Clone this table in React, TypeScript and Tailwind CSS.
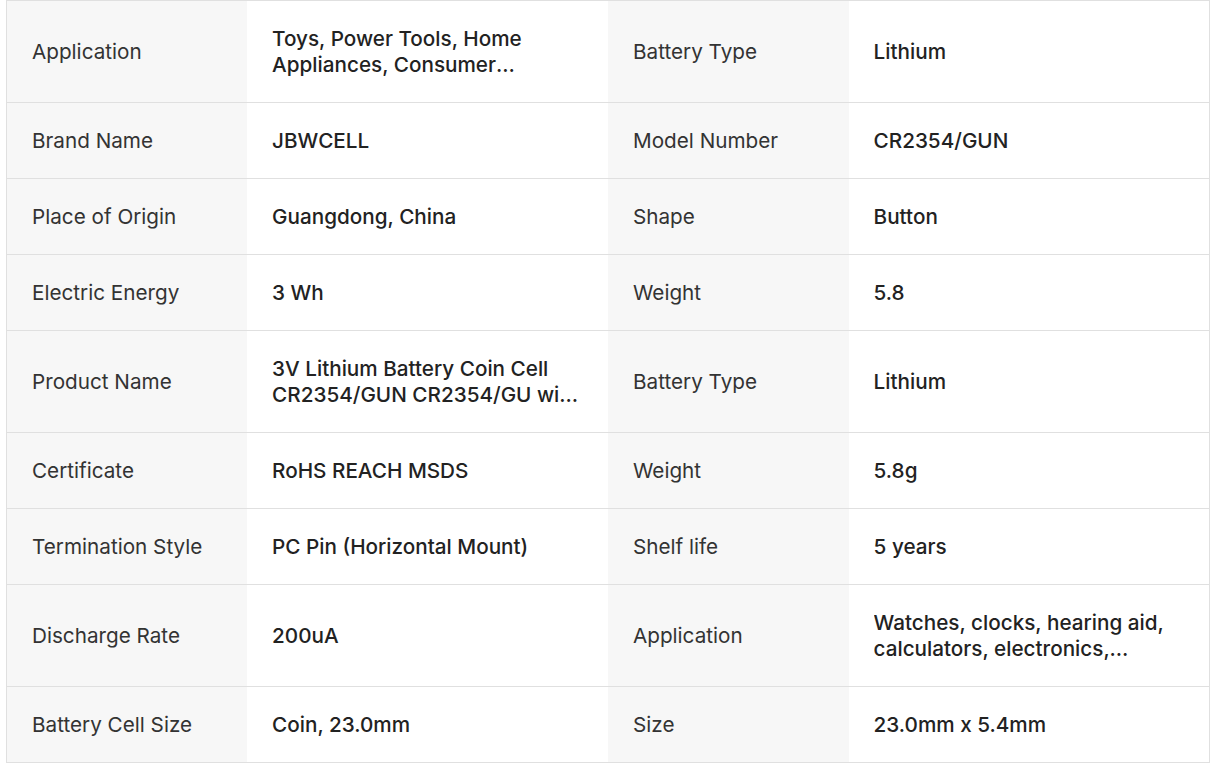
import React from "react";

type Row = [string, string, string, string];

const rows: Row[] = [
  ["Application", "Toys, Power Tools, Home Appliances, Consumer Electronics, Watches", "Battery Type", "Lithium"],
  ["Brand Name", "JBWCELL", "Model Number", "CR2354/GUN"],
  ["Place of Origin", "Guangdong, China", "Shape", "Button"],
  ["Electric Energy", "3 Wh", "Weight", "5.8"],
  ["Product Name", "3V Lithium Battery Coin Cell CR2354/GUN CR2354/GU with solder pins", "Battery Type", "Lithium"],
  ["Certificate", "RoHS REACH MSDS", "Weight", "5.8g"],
  ["Termination Style", "PC Pin (Horizontal Mount)", "Shelf life", "5 years"],
  ["Discharge Rate", "200uA", "Application", "Watches, clocks, hearing aid, calculators, electronics, automotive keys"],
  ["Battery Cell Size", "Coin, 23.0mm", "Size", "23.0mm x 5.4mm"],
];

const Label = ({ text }: { text: string }) => (
  <td className="bg-[#f7f7f7] pl-[25px] pr-[24px] pt-[25px] pb-[24px] align-middle text-[#333333] font-normal">
    {text}
  </td>
);

const Value = ({ text }: { text: string }) => (
  <td className="bg-white pl-[25px] pr-[24px] pt-[25px] pb-[24px] align-middle text-[#222222] font-medium">
    <div className="line-clamp-2">{text}</div>
  </td>
);

export default function App() {
  return (
    <div className="bg-white min-h-screen pl-[6px]" style={{ fontFamily: "Inter, 'Noto Sans', sans-serif" }}>
      <table className="w-[1204px] table-fixed border-collapse border border-[#e0e0e0] text-[20.7px] leading-[26px]">
        <colgroup>
          <col className="w-[20%]" />
          <col className="w-[30%]" />
          <col className="w-[20%]" />
          <col className="w-[30%]" />
        </colgroup>
        <tbody>
          {rows.map((r, i) => (
            <tr key={i} className="border-b border-[#e0e0e0]">
              <Label text={r[0]} />
              <Value text={r[1]} />
              <Label text={r[2]} />
              <Value text={r[3]} />
            </tr>
          ))}
        </tbody>
      </table>
    </div>
  );
}
